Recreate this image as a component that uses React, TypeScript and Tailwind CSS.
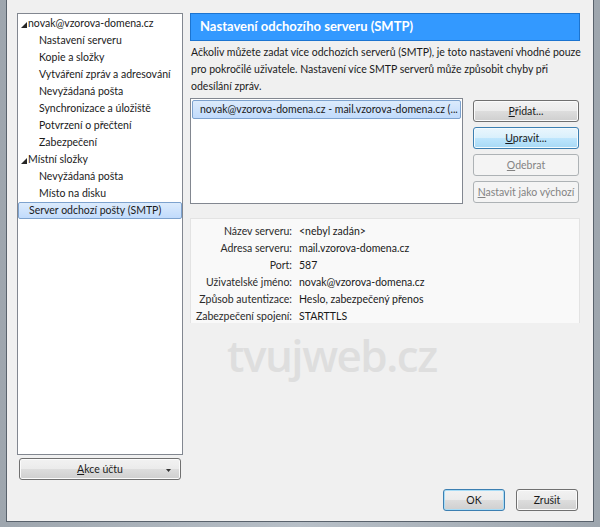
import React from 'react';

type BtnKind = 'normal' | 'focused' | 'disabled' | 'default';

const btnStyles: Record<BtnKind, string> = {
  normal:
    'border-[#707070] text-[#1a1a1a] bg-[linear-gradient(#f2f2f2_0%,#ebebeb_50%,#dddddd_51%,#cfcfcf_100%)] shadow-[inset_0_0_0_1px_#fbfbfb]',
  focused:
    'border-[#3c7fb1] text-[#1a1a1a] bg-[linear-gradient(#eaf6fd_0%,#d9f0fc_50%,#bee6fd_51%,#a7d9f5_100%)] shadow-[inset_0_0_0_1px_#f4fbfe]',
  disabled: 'border-[#adb2b5] text-[#838383] bg-[#f4f4f4]',
  default:
    'border-[#3c7fb1] text-[#1a1a1a] bg-[linear-gradient(#f2f2f2_0%,#ebebeb_50%,#dddddd_51%,#cfcfcf_100%)] shadow-[inset_0_0_0_1px_#a8dcf6]',
};

const WinButton: React.FC<{ kind?: BtnKind; className?: string; children: React.ReactNode }> = ({
  kind = 'normal',
  className = '',
  children,
}) => (
  <div
    className={`flex items-center justify-center h-[22px] border rounded-[3px] leading-none whitespace-nowrap ${btnStyles[kind]} ${className}`}
  >
    {children}
  </div>
);

const Arrow = () => (
  <svg width="6" height="6" viewBox="0 0 6 6" className="mr-[1px] mt-[2px] shrink-0">
    <polygon points="6,0 6,6 0,6" fill="#262626" />
  </svg>
);

const treeItems = [
  { label: 'novak@vzorova-domena.cz', level: 0, arrow: true },
  { label: 'Nastavení serveru', level: 1 },
  { label: 'Kopie a složky', level: 1 },
  { label: 'Vytváření zpráv a adresování', level: 1 },
  { label: 'Nevyžádaná pošta', level: 1 },
  { label: 'Synchronizace a úložiště', level: 1 },
  { label: 'Potvrzení o přečtení', level: 1 },
  { label: 'Zabezpečení', level: 1 },
  { label: 'Místní složky', level: 0, arrow: true },
  { label: 'Nevyžádaná pošta', level: 1 },
  { label: 'Místo na disku', level: 1 },
  { label: 'Server odchozí pošty (SMTP)', level: 0, selected: true },
];

const details = [
  ['Název serveru:', '<nebyl zadán>'],
  ['Adresa serveru:', 'mail.vzorova-domena.cz'],
  ['Port:', '587'],
  ['Uživatelské jméno:', 'novak@vzorova-domena.cz'],
  ['Způsob autentizace:', 'Heslo, zabezpečený přenos'],
  ['Zabezpečení spojení:', 'STARTTLS'],
];

export default function App() {
  return (
    <div className="w-[600px] h-[527px] bg-[linear-gradient(90deg,#9ea6ae,#b8c0c8_50%,#9ea6ae)] px-[6px] pb-[5px] font-['Lato',sans-serif] text-[10.5px] text-[#1a1a1a]">
      <div className="h-full flex flex-col bg-[#f0f0f0] border-x border-b border-[#59626c] pl-[10px] pr-[13px] pt-[13px] pb-[11px]">
        <div className="flex flex-1 gap-[7px]">
          {/* Left: account tree */}
          <div className="w-[166px] shrink-0 flex flex-col">
            <div className="h-[442px] bg-white border border-[#828790] pt-[1px] overflow-hidden">
              {treeItems.map((it, i) => (
                <div
                  key={i}
                  className={`h-[17px] flex items-center whitespace-nowrap ${
                    it.selected
                      ? 'pl-[10px] border border-[#7da2ce] rounded-[2px] bg-[linear-gradient(#dcebfc,#c1dbfc)]'
                      : it.level === 0
                      ? 'pl-[3px]'
                      : 'pl-[21px]'
                  }`}
                >
                  {it.arrow && <Arrow />}
                  <span>{it.label}</span>
                </div>
              ))}
            </div>
            <WinButton className="mt-[3px] mx-[2px] relative">
              <span>
                <span className="underline">A</span>kce účtu
              </span>
              <svg width="5" height="3" viewBox="0 0 5 3" className="absolute right-[9px] top-[10px]">
                <polygon points="0,0 5,0 2.5,3" fill="#333" />
              </svg>
            </WinButton>
          </div>

          {/* Right: SMTP settings */}
          <div className="flex-1 min-w-0 flex flex-col">
            <div className="h-[28px] flex items-center pl-[9px] bg-[#3399ff] border border-[#1c74d0] text-white font-bold text-[13px]">
              Nastavení odchozího serveru (SMTP)
            </div>
            <p className="mt-[3px] leading-[17px] whitespace-nowrap pl-[1px]">
              Ačkoliv můžete zadat více odchozích serverů (SMTP), je toto nastavení vhodné pouze
              <br />
              pro pokročilé uživatele. Nastavení více SMTP serverů může způsobit chyby při
              <br />
              odesílání zpráv.
            </p>
            <div className="mt-[3px] flex gap-[10px]">
              <div className="w-[273px] h-[106px] bg-white border border-[#828790] p-[1px]">
                <div className="h-[19px] flex items-center pl-[7px] border border-[#7da2ce] rounded-[2px] bg-[linear-gradient(#dcebfc,#c1dbfc)] whitespace-nowrap overflow-hidden">
                  novak@vzorova-domena.cz - mail.vzorova-domena.cz (...
                </div>
              </div>
              <div className="w-[106px] flex flex-col gap-[5px] pt-[2px]">
                <WinButton>
                  <span>
                    <span className="underline">P</span>řidat...
                  </span>
                </WinButton>
                <WinButton kind="focused">
                  <span>
                    <span className="underline">U</span>pravit...
                  </span>
                </WinButton>
                <WinButton kind="disabled">
                  <span>
                    <span className="underline">O</span>debrat
                  </span>
                </WinButton>
                <WinButton kind="disabled">
                  <span>
                    <span className="underline">N</span>astavit jako výchozí
                  </span>
                </WinButton>
              </div>
            </div>

            <div className="mt-[14px] h-[105px] bg-[#f9f9f9] border border-[#e3e3e3] border-b-0 pt-[4px]">
              {details.map(([k, v]) => (
                <div key={k} className="h-[17px] flex items-center whitespace-nowrap">
                  <span className="w-[101px] shrink-0 text-right text-[#2a2a2a]">{k}</span>
                  <span className="ml-[7px]">{v}</span>
                </div>
              ))}
            </div>

            <div className="mt-[6px] pl-[37px] font-['Open_Sans',sans-serif] text-[44px] leading-[52px] font-semibold tracking-[-1.5px] text-[#dedede] select-none">
              tvujweb.cz
            </div>
          </div>
        </div>

        {/* Footer */}
        <div className="flex justify-end gap-[11px] mt-[9px] pr-[2px]">
          <WinButton kind="default" className="w-[62px]">
            OK
          </WinButton>
          <WinButton className="w-[62px]">Zrušit</WinButton>
        </div>
      </div>
    </div>
  );
}
